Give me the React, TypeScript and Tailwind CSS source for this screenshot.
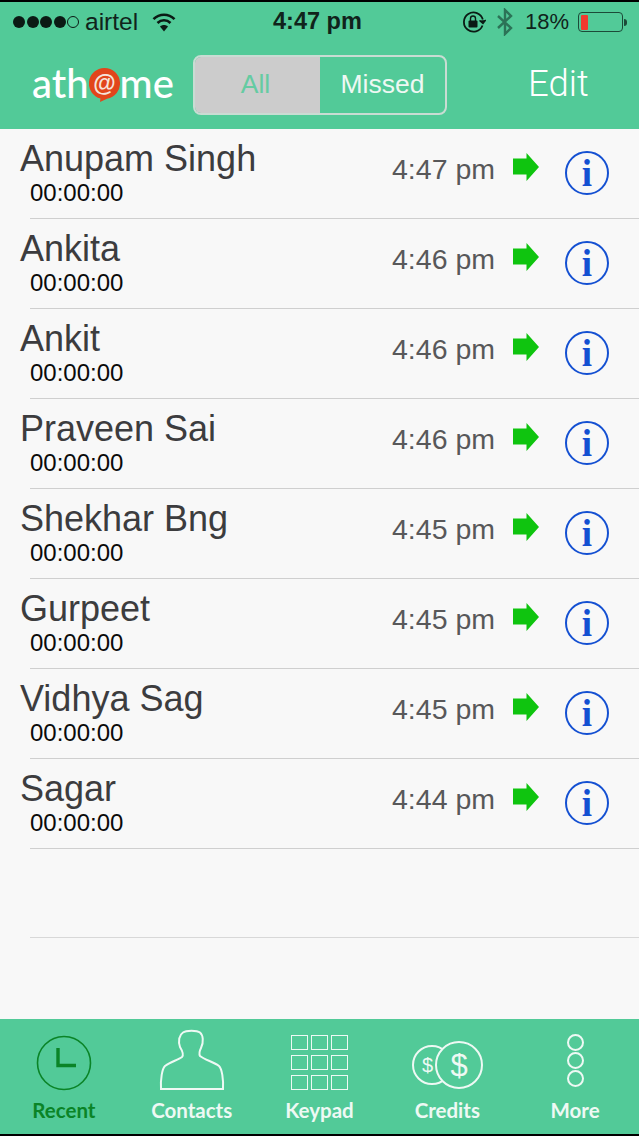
import React from "react";

const calls = [
  { name: "Anupam Singh", time: "4:47 pm" },
  { name: "Ankita", time: "4:46 pm" },
  { name: "Ankit", time: "4:46 pm" },
  { name: "Praveen Sai", time: "4:46 pm" },
  { name: "Shekhar Bng", time: "4:45 pm" },
  { name: "Gurpeet", time: "4:45 pm" },
  { name: "Vidhya Sag", time: "4:45 pm" },
  { name: "Sagar", time: "4:44 pm" },
];

function StatusBar() {
  return (
    <div className="flex h-[40px] items-center whitespace-nowrap text-[#10231b]">
      <div className="ml-[13px] flex gap-[1.5px]">
        <span className="h-3 w-3 rounded-full bg-[#0b1a14]" />
        <span className="h-3 w-3 rounded-full bg-[#0b1a14]" />
        <span className="h-3 w-3 rounded-full bg-[#0b1a14]" />
        <span className="h-3 w-3 rounded-full bg-[#0b1a14]" />
        <span className="h-3 w-3 rounded-full border border-[#0b1a14]" />
      </div>
      <span className="ml-[6px] w-[53px] text-[24.5px] leading-none">airtel</span>
      <svg className="ml-[14px]" width="24" height="20" viewBox="0 0 24 20" fill="none" stroke="#0b1a14" strokeWidth="2.6">
        <path d="M1.5 7.2C7.5 1.2 16.5 1.2 22.5 7.2" />
        <path d="M5.5 11C9.2 7.4 14.8 7.4 18.5 11" />
        <path d="M12 19.5L8 14.6C10.2 12.6 13.8 12.6 16 14.6Z" fill="#0b1a14" stroke="none" />
      </svg>
      <span className="ml-[97px] w-[90px] text-[23.5px] leading-none font-bold">4:47 pm</span>
      <svg className="ml-[99px]" width="24" height="22" viewBox="0 0 24 22" fill="none" stroke="#0b1a14" strokeWidth="1.8">
        <path d="M20.5 14.5A9.6 9.6 0 1 1 20.8 8.5" />
        <path d="M17.5 9.5L21 12.5L23.8 9" strokeWidth="1.4" fill="#0b1a14" />
        <rect x="6.5" y="9.5" width="9" height="7" rx="1" fill="#0b1a14" stroke="none" />
        <path d="M8.5 10V7.5A2.5 2.5 0 0 1 13.5 7.5V10" strokeWidth="1.4" />
      </svg>
      <svg className="ml-[10px]" width="18" height="28" viewBox="0 0 18 28" fill="none" stroke="#2c7357" strokeWidth="2.4">
        <path d="M2 8L15 20L9 26V2L15 8L2 20" />
      </svg>
      <span className="ml-[11px] w-[44px] text-[22px] leading-none">18%</span>
      <div className="ml-[9px] flex items-center">
        <div className="flex h-[20px] w-[45px] rounded-[4px] border border-[#1c4a38] p-[1.5px]">
          <div className="w-[7px] rounded-[1px] bg-[#f23a2e]" />
        </div>
        <div className="ml-[1px] h-[7px] w-[3px] rounded-r-full bg-[#1c4a38]" />
      </div>
    </div>
  );
}

function Logo() {
  return (
    <div className="ml-[32px] flex w-[146px] items-center font-['Lato',sans-serif] text-[40px] leading-none font-medium text-white">
      <span className="pb-[4px]">ath</span>
      <svg className="shrink-0" width="31" height="34" viewBox="0 0 31 34">
        <path d="M15.5 0A15.5 15.5 0 0 1 18 30.8L11 34L11.5 30.5A15.5 15.5 0 0 1 15.5 0Z" fill="#e2451b" />
        <text x="15.5" y="22.5" textAnchor="middle" fontSize="23" fontWeight="700" fill="#f6e3da" fontFamily="Liberation Sans, sans-serif">@</text>
      </svg>
      <span className="pb-[4px]">me</span>
    </div>
  );
}

function Segments() {
  return (
    <div className="ml-[15px] flex h-[60px] w-[254px] overflow-hidden rounded-[8px] border-2 border-[#c9dcd3] text-[26.5px]">
      <div className="flex w-[125px] items-center justify-center bg-[#cccccc] pr-[4px] text-[#65cba2]">All</div>
      <div className="flex flex-1 items-center justify-center text-[#eef8f3]">Missed</div>
    </div>
  );
}

function InfoIcon() {
  return (
    <div className="flex h-[44px] w-[44px] items-center justify-center rounded-full border-[2px] border-[#1450d2] font-['Liberation_Serif',serif] text-[37px] leading-none font-bold text-[#1450d2]">
      i
    </div>
  );
}

function CallRow({ name, time }: { name: string; time: string }) {
  return (
    <div className="flex h-[90px] flex-col">
      <div className="flex flex-1 items-center">
        <div className="ml-[20px] flex-1 pb-[2px]">
          <div className="h-[41px] text-[36px] leading-[41px] text-[#3c3c3e]">{name}</div>
          <div className="ml-[10px] h-[28px] text-[24px] leading-[28px] text-[#0a0a0a]">00:00:00</div>
        </div>
        <span className="mb-[8px] text-[28.5px] text-[#58585a]">{time}</span>
        <svg className="mb-[14px] ml-[18px]" width="26" height="28" viewBox="0 0 26 28">
          <path d="M0 5.5H13.5V0L26 14L13.5 28V21.5H0Z" fill="#0fc40f" />
        </svg>
        <div className="mr-[30px] mb-[1px] ml-[26px]">
          <InfoIcon />
        </div>
      </div>
      <div className="ml-[30px] h-[1px] bg-[#cfcfcf]" />
    </div>
  );
}

function Tab({ label, active, children }: { label: string; active?: boolean; children: React.ReactNode }) {
  return (
    <div className="flex flex-col items-center">
      <div className="flex h-[65px] items-end justify-center pb-[2px]">{children}</div>
      <span className={`mt-[5px] font-['Lato',sans-serif] text-[20.5px] leading-[24px] font-bold ${active ? "text-[#0a8427]" : "text-[#eef9f4]"}`}>{label}</span>
    </div>
  );
}

export default function App() {
  return (
    <div className="flex h-[1136px] w-[639px] flex-col overflow-hidden border-y-2 border-black bg-[#f8f8f8] font-['Liberation_Sans',Arial,sans-serif]">
      <div className="h-[127px] bg-[#52ca98]">
        <StatusBar />
        <div className="flex h-[87px] items-center pb-[2px]">
          <Logo />
          <Segments />
          <span className="ml-[81px] font-['Roboto',sans-serif] text-[36.5px] font-light text-white">Edit</span>
        </div>
      </div>

      <div className="flex-1">
        {calls.map((c) => (
          <CallRow key={c.name} name={c.name} time={c.time} />
        ))}
        <div className="h-[90px] pt-[88px]">
          <div className="ml-[30px] h-[1px] bg-[#d8d8d8]" />
        </div>
      </div>

      <div className="grid h-[115px] grid-cols-5 bg-[#52ca98] pt-[9px]">
        <Tab label="Recent" active>
          <svg width="56" height="56" viewBox="0 0 56 56" fill="none" stroke="#0a8427">
            <circle cx="28" cy="28" r="26.5" strokeWidth="1.6" />
            <path d="M22 13V30.5H40" strokeWidth="3.4" />
          </svg>
        </Tab>
        <Tab label="Contacts">
          <svg width="66" height="62" viewBox="0 0 66 62" fill="none" stroke="#eef9f4" strokeWidth="2">
            <path d="M2 60H64C64.5 50 63 40 60 37C55 33 46 31 41 27C40 25 40 23 42 19C45 13 44 6 41 3.5C38 1 27 1 24 3.5C20 6 19 12 21 18C24 23 25 26 23 28C19 31 11 33 6 37C3 40 1.5 50 2 60Z" />
          </svg>
        </Tab>
        <Tab label="Keypad">
          <div className="mb-[1px] ml-[1px] grid grid-cols-3 gap-x-[3px] gap-y-[5px]">
            {Array.from({ length: 9 }).map((_, i) => (
              <div key={i} className="h-[15px] w-[17px] border-[1.5px] border-[#eef9f4]" />
            ))}
          </div>
        </Tab>
        <Tab label="Credits">
          <svg className="mb-[2px] ml-[1px]" width="72" height="48" viewBox="0 0 72 48" fill="none" stroke="#eef9f4" strokeWidth="2">
            <circle cx="20" cy="24" r="19" />
            <circle cx="47" cy="24" r="23" fill="#52ca98" />
            <text x="10" y="31" fontSize="20" fill="#eef9f4" stroke="none" fontFamily="Liberation Sans, sans-serif">$</text>
            <text x="47" y="35" textAnchor="middle" fontSize="31" fill="#eef9f4" stroke="none" fontFamily="Liberation Sans, sans-serif">$</text>
          </svg>
        </Tab>
        <Tab label="More">
          <div className="mb-[4px] flex flex-col gap-[1px]">
            <div className="h-[17px] w-[17px] rounded-full border-2 border-[#eef9f4]" />
            <div className="h-[17px] w-[17px] rounded-full border-2 border-[#eef9f4]" />
            <div className="h-[17px] w-[17px] rounded-full border-2 border-[#eef9f4]" />
          </div>
        </Tab>
      </div>
    </div>
  );
}
